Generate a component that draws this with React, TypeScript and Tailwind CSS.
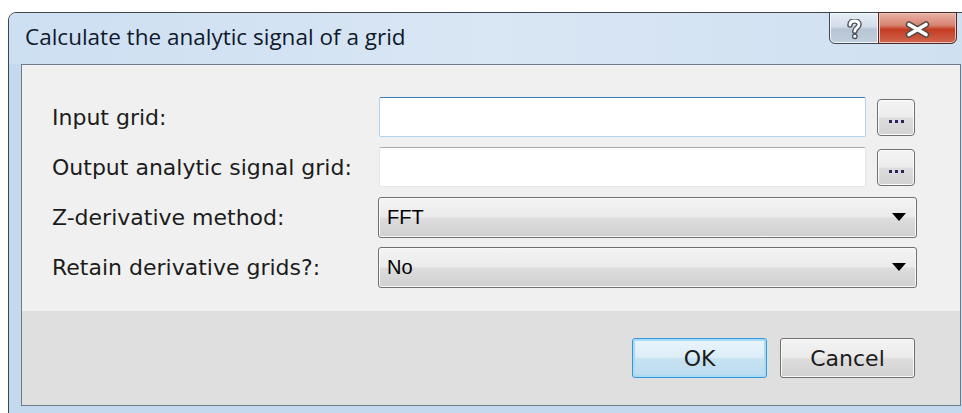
import React from "react";

const labelFont = "font-['DejaVu_Sans',Verdana,sans-serif]";

function BrowseBtn() {
  return (
    <button className="ml-[11px] w-[38px] h-[37px] rounded-[4px] border border-[#707070] bg-[linear-gradient(#f4f4f4_0%,#ececec_48%,#dddddd_52%,#d2d2d2_100%)] shadow-[inset_0_0_0_1px_#fcfcfc] flex items-center justify-center pt-[9px] gap-[3px]">
      <span className="w-[3px] h-[3px] bg-[#2a2458]" />
      <span className="w-[3px] h-[3px] bg-[#2a2458]" />
      <span className="w-[3px] h-[3px] bg-[#2a2458]" />
    </button>
  );
}

function Combo({ value }: { value: string }) {
  return (
    <div className="-ml-[1px] w-[539px] h-[41px] rounded-[3px] border border-[#707070] bg-[linear-gradient(#f3f3f3_0%,#ebebeb_48%,#dddddd_52%,#d0d0d0_100%)] shadow-[inset_0_0_0_1px_#fafafa] flex items-center justify-between pl-[8px] pr-[10px]">
      <span className="font-['Liberation_Sans',Arial,sans-serif] text-[20px] text-black">{value}</span>
      <svg width="14" height="8" viewBox="0 0 14 8">
        <path d="M0 0h14L7 8z" fill="#000" />
      </svg>
    </div>
  );
}

function Row({ label, children }: { label: string; children: React.ReactNode }) {
  return (
    <div className="h-[40px] flex items-center">
      <div className={`w-[327px] ${labelFont} text-[22px] text-[#1c1c1c]`}>{label}</div>
      {children}
    </div>
  );
}

export default function App() {
  return (
    <div className="w-[962px] h-[413px] overflow-hidden bg-white pt-[12px] pl-[8px]">
      <div className="w-[966px] h-[410px] rounded-t-[8px] border border-[#40464e] bg-[#c4d8ee] shadow-[inset_0_1px_0_#f2f7fc] flex flex-col">
        {/* title bar */}
        <div className="h-[51px] flex items-start justify-between bg-[linear-gradient(90deg,#cddff2_0%,#d9e6f4_50%,#cfe0f1_100%)] rounded-t-[7px]">
          <div className="pl-[16px] pt-[9px] leading-[30px] font-['Open_Sans',sans-serif] text-[22.5px] text-[#101a2c]">
            Calculate the analytic signal of a grid
          </div>
          <div className="-mt-[1px] mr-[16px] flex h-[32px]">
            <div className="w-[50px] h-[32px] rounded-bl-[6px] border border-[#3f4854] bg-[linear-gradient(#e6edf5_0%,#d3dde9_45%,#b6c4d5_55%,#c2cfde_100%)] shadow-[inset_0_0_0_1px_#f3f7fb] flex items-center justify-center pt-[2px]">
              <svg width="15" height="21" viewBox="0 0 15 21">
                <path d="M3 6C3 3.3 5 2 7.5 2S12 3.3 12 5.6C12 8.6 7.8 9 7.8 12.2" fill="none" stroke="#4b5361" strokeWidth="5.6" strokeLinecap="round" strokeLinejoin="round" />
                <circle cx="7.8" cy="17.3" r="2.9" fill="#4b5361" />
                <path d="M3 6C3 3.3 5 2 7.5 2S12 3.3 12 5.6C12 8.6 7.8 9 7.8 12.2" fill="none" stroke="#fff" strokeWidth="2.8" strokeLinecap="round" strokeLinejoin="round" />
                <circle cx="7.8" cy="17.3" r="1.5" fill="#fff" />
              </svg>
            </div>
            <div className="w-[79px] h-[32px] -ml-[1px] rounded-br-[6px] border border-[#4a2a26] bg-[linear-gradient(#e8b1a6_0%,#d98573_40%,#c43c22_55%,#d0664f_100%)] shadow-[inset_0_0_0_1px_#efc3b9] flex items-center justify-center pt-[2px]">
              <svg width="27" height="17" viewBox="0 0 27 17">
                <path d="M5 3.5L22 13.5M22 3.5L5 13.5" stroke="#4f4a4a" strokeWidth="6.5" strokeLinecap="round" />
                <path d="M5 3.5L22 13.5M22 3.5L5 13.5" stroke="#fff" strokeWidth="3.6" strokeLinecap="round" />
              </svg>
            </div>
          </div>
        </div>

        {/* client area */}
        <div className="ml-[12px] w-[940px] h-[342px] border border-[#6e7c8b] flex flex-col">
          <div className="h-[246px] bg-[#f0f0f0] pt-[32px] pl-[30px] flex flex-col gap-[10px]">
            <Row label="Input grid:">
              <input className="w-[487px] h-[40px] rounded-[2px] bg-white border border-[#b3d3eb] border-t-[#3d7bad] outline-none" />
              <BrowseBtn />
            </Row>
            <Row label="Output analytic signal grid:">
              <input className="w-[487px] h-[40px] rounded-[2px] bg-white border border-[#e2e6ec] border-t-[#abadb3] outline-none" />
              <BrowseBtn />
            </Row>
            <Row label="Z-derivative method:">
              <Combo value="FFT" />
            </Row>
            <Row label="Retain derivative grids?:">
              <Combo value="No" />
            </Row>
          </div>
          <div className="h-[94px] bg-[#dfdfdf] flex justify-end items-start pt-[27px] pr-[45px] gap-[13px]">
            <button className={`w-[135px] h-[40px] rounded-[3px] border border-[#3399dd] bg-[linear-gradient(#eaf5fc_0%,#dcedf8_48%,#c6e2f3_52%,#bcdcef_100%)] shadow-[inset_0_0_0_2px_#a8dcf6] ${labelFont} text-[22px] text-[#1c1c1c]`}>
              OK
            </button>
            <button className={`w-[135px] h-[40px] rounded-[3px] border border-[#707070] bg-[linear-gradient(#f3f3f3_0%,#ebebeb_48%,#dddddd_52%,#d0d0d0_100%)] shadow-[inset_0_0_0_1px_#fafafa] ${labelFont} text-[22px] text-[#1c1c1c]`}>
              Cancel
            </button>
          </div>
        </div>
      </div>
    </div>
  );
}
